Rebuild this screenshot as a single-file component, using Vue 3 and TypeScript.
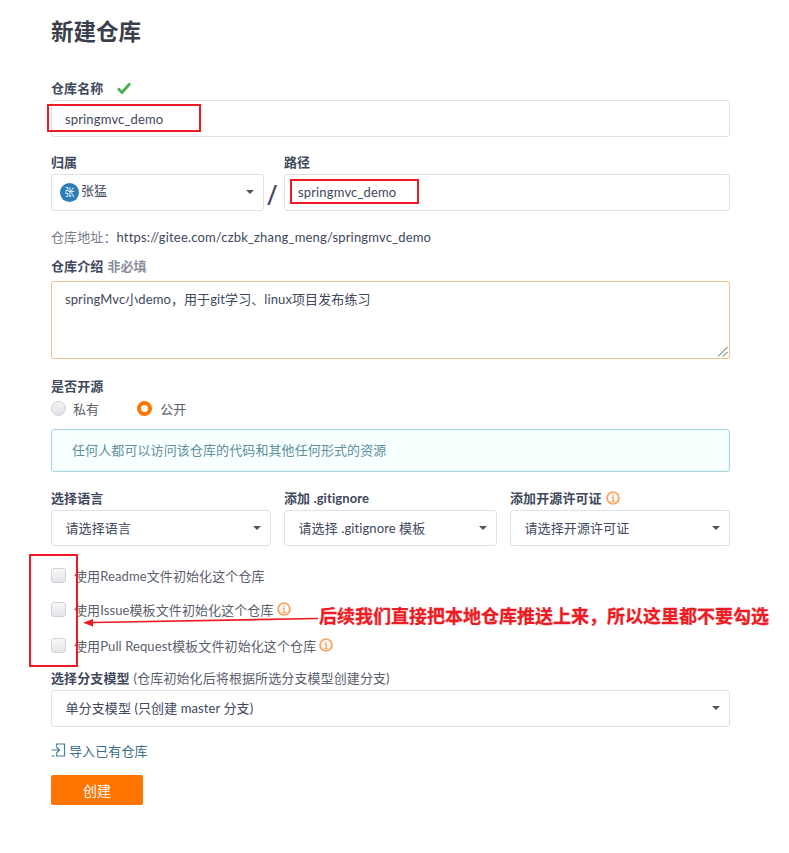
<script setup lang="ts">
const checks = [
  { text: '使用Readme文件初始化这个仓库', info: false, cls: 'c1' },
  { text: '使用Issue模板文件初始化这个仓库', info: true, cls: 'c2' },
  { text: '使用Pull Request模板文件初始化这个仓库', info: true, cls: 'c3' },
]
</script>

<template>
  <main class="page">
    <h1 class="title">新建仓库</h1>

    <div class="label name-label">仓库名称
      <svg class="tick" width="16" height="14" viewBox="0 0 16 14"><path d="M2 7.5l4 4 8-9" fill="none" stroke="#4aae4f" stroke-width="2.8"/></svg>
    </div>
    <div class="field input-text name-input">springmvc_demo</div>

    <div class="owner-row">
      <div class="owner">
        <div class="label">归属</div>
        <div class="field owner-select">
          <span class="avatar">张</span><span class="owner-name">张猛</span>
          <i class="caret"></i>
        </div>
      </div>
      <div class="slash">/</div>
      <div class="path">
        <div class="label">路径</div>
        <div class="field input-text">springmvc_demo</div>
      </div>
    </div>

    <div class="address">仓库地址：<span class="url">https://gitee.com/czbk_zhang_meng/springmvc_demo</span></div>

    <div class="label intro-label">仓库介绍 <span class="muted">非必填</span></div>
    <div class="textarea">springMvc小demo，用于git学习、linux项目发布练习
      <svg class="grip" width="11" height="11" viewBox="0 0 11 11"><path d="M10.5 1L1 10.5M10.5 6L6 10.5" stroke="#555" stroke-width="1" fill="none"/></svg>
    </div>

    <div class="label open-label">是否开源</div>
    <div class="radios">
      <span class="radio"></span><span class="radio-text">私有</span>
      <span class="radio on"></span><span class="radio-text">公开</span>
    </div>
    <div class="notice">任何人都可以访问该仓库的代码和其他任何形式的资源</div>

    <div class="three">
      <div>
        <div class="label">选择语言</div>
        <div class="field select-text">请选择语言<i class="caret"></i></div>
      </div>
      <div>
        <div class="label">添加 .gitignore</div>
        <div class="field select-text">请选择 .gitignore 模板<i class="caret"></i></div>
      </div>
      <div>
        <div class="label">添加开源许可证
          <svg class="info" viewBox="0 0 14 14"><circle cx="7" cy="7" r="5.9" fill="#fff" stroke="#f9a766" stroke-width="1.9"/><path d="M7 3.2v1.6M5.6 6.2H7.2v4M5.4 10.4h3.4" stroke="#f9a766" stroke-width="1.4" fill="none"/></svg>
        </div>
        <div class="field select-text">请选择开源许可证<i class="caret"></i></div>
      </div>
    </div>

    <div v-for="c in checks" :key="c.cls" class="check" :class="c.cls">
      <span class="box"></span>
      <span class="check-text">{{ c.text }}</span>
      <svg v-if="c.info" class="info" viewBox="0 0 14 14"><circle cx="7" cy="7" r="5.9" fill="#fff" stroke="#f9a766" stroke-width="1.9"/><path d="M7 3.2v1.6M5.6 6.2H7.2v4M5.4 10.4h3.4" stroke="#f9a766" stroke-width="1.4" fill="none"/></svg>
    </div>

    <div class="label branch-label">选择分支模型 <span class="plain">(仓库初始化后将根据所选分支模型创建分支)</span></div>
    <div class="field select-text branch">单分支模型 (只创建 master 分支)<i class="caret"></i></div>

    <a class="import">
      <svg width="15" height="14" viewBox="0 0 15 14"><path d="M5.5 3.5V1h8v12h-8v-2.5M.5 7h8M5.5 4l3 3-3 3M.5 13h3" fill="none" stroke="#3f7f99" stroke-width="1.2"/></svg>
      导入已有仓库
    </a>
    <button class="create">创建</button>

    <!-- screenshot annotations lying over the form -->
    <div class="mark m1"></div>
    <div class="mark m2"></div>
    <div class="mark m3"></div>
    <svg class="arrow" width="240" height="16" viewBox="0 0 240 16">
      <path d="M235 3.5L10 7.5" stroke="#ed1c24" stroke-width="1.6" fill="none"/>
      <path d="M0 7.7l10-3.7v7.4z" fill="#ed1c24"/>
    </svg>
    <div class="note">后续我们直接把本地仓库推送上来，所以这里都不要勾选</div>
  </main>
</template>

<style scoped>
.page {
  position: relative;
  box-sizing: border-box;
  width: 789px;
  height: 853px;
  padding: 18px 59px 0 51px;
  background: #fff;
  color: #40485b;
  font-family: Lato, "Noto Sans CJK SC", sans-serif;
  font-size: 13px;
  letter-spacing: 0.1px;
  overflow: hidden;
}
.title {
  margin: 0 0 33px;
  font-size: 22.5px;
  line-height: 28px;
  font-weight: 700;
  letter-spacing: 0;
  color: #3a3f4b;
}
.label {
  display: flex;
  align-items: center;
  gap: 4px;
  height: 18px;
  line-height: 18px;
  margin-bottom: 3px;
  font-weight: 700;
  color: #40485b;
}
.name-label { gap: 13px; }
.tick { margin-top: -1px; }
.field {
  position: relative;
  box-sizing: border-box;
  height: 37px;
  line-height: 35px;
  border: 1px solid #dfe1ea;
  border-radius: 3px;
  background: #fff;
  color: #40485b;
}
.input-text { padding-left: 13px; letter-spacing: 0.15px; }
.name-input { line-height: 37px; }
.select-text { padding-left: 13.5px; }
.caret {
  position: absolute;
  right: 9px;
  top: 15px;
  width: 0;
  height: 0;
  border-left: 4px solid transparent;
  border-right: 4px solid transparent;
  border-top: 4px solid #555;
}
.owner-row {
  display: flex;
  margin-top: 16px;
}
.owner { width: 213px; }
.owner-select {
  display: flex;
  align-items: center;
  padding-left: 8px;
}
.avatar {
  width: 19px;
  height: 19px;
  border-radius: 50%;
  background: #2b7cb8;
  color: #fff;
  font-size: 10px;
  line-height: 19px;
  text-align: center;
}
.owner-name { margin-left: 2px; margin-top: -5px; }
.slash {
  width: 20px;
  margin: 21px 0 0;
  padding-left: 3px;
  box-sizing: border-box;
  font-family: "Open Sans", sans-serif;
  font-size: 28px;
  line-height: 40px;
  color: #40485b;
}
.path { flex: 1; }
.address {
  margin-top: 14px;
  height: 18px;
  line-height: 18px;
  color: #767c88;
}
.url { color: #40485b; letter-spacing: 0.17px; }
.intro-label { margin-top: 11px; margin-bottom: 6px; }
.muted { color: #8a909c; }
.textarea {
  position: relative;
  box-sizing: border-box;
  height: 78px;
  padding: 7px 13px;
  line-height: 20px;
  border: 1px solid #eec28e;
  border-radius: 2px;
}
.grip { position: absolute; right: 1px; bottom: 1px; }
.open-label { margin-top: 18px; margin-bottom: 4px; }
.radios {
  display: flex;
  align-items: center;
  height: 18px;
  margin-bottom: 12px;
}
.radio {
  box-sizing: border-box;
  width: 15px;
  height: 15px;
  border-radius: 50%;
  border: 1px solid #cfd1d6;
  background: linear-gradient(#f2f2f4, #e2e3e7);
}
.radio.on {
  border: 4px solid #ff7500;
  background: #fff;
}
.radio-text { margin: 0 38px 0 7px; color: #5a606c; }
.on + .radio-text { margin-left: 8px; }
.notice {
  box-sizing: border-box;
  height: 43px;
  line-height: 41px;
  padding-left: 20px;
  border: 1px solid #a9d5de;
  border-radius: 3px;
  background: #f8ffff;
  color: #5e8f9b;
  box-shadow: inset 0 0 0 1px #eef9fa;
}
.three {
  display: grid;
  grid-template-columns: 220px 213px 220px;
  column-gap: 13px;
  margin-top: 17px;
}
.three .field { height: 36px; line-height: 34px; }
.info { width: 14px; height: 14px; flex: none; }
.check {
  display: flex;
  align-items: center;
  height: 20px;
  color: #5a606c;
}
.c1 { margin-top: 19px; }
.c2 { margin-top: 14px; }
.c3 { margin-top: 16px; }
.box {
  box-sizing: border-box;
  width: 15px;
  height: 15px;
  margin-right: 8px;
  border: 1px solid #cfd1d6;
  border-radius: 3px;
  background: linear-gradient(#f7f7f8, #e4e5e9);
}
.check .info { margin-left: 3px; }
.branch-label { margin-top: 14px; margin-bottom: 3px; }
.plain { font-weight: 400; color: #5a606c; }
.import {
  display: flex;
  align-items: center;
  gap: 3px;
  height: 18px;
  margin-top: 14px;
  color: #3a6f85;
}
.create {
  display: block;
  width: 92px;
  height: 30px;
  margin-top: 16px;
  border: 0;
  border-radius: 2px;
  background: #ff7500;
  color: #fff;
  font: inherit;
  font-size: 14px;
}
.mark {
  position: absolute;
  box-sizing: border-box;
  border: 2px solid #ed1c24;
}
.m1 { left: 47px; top: 104px; width: 154px; height: 28px; }
.m2 { left: 290px; top: 179px; width: 129px; height: 25px; }
.m3 { left: 29px; top: 554px; width: 49px; height: 113px; }
.arrow { position: absolute; left: 83px; top: 615px; }
.note {
  position: absolute;
  left: 319px;
  top: 604px;
  white-space: nowrap;
  font-size: 18px;
  line-height: 24px;
  font-weight: 700;
  letter-spacing: 0;
  color: #ed1c24;
  -webkit-text-stroke: 0.3px #ed1c24;
}
</style>
